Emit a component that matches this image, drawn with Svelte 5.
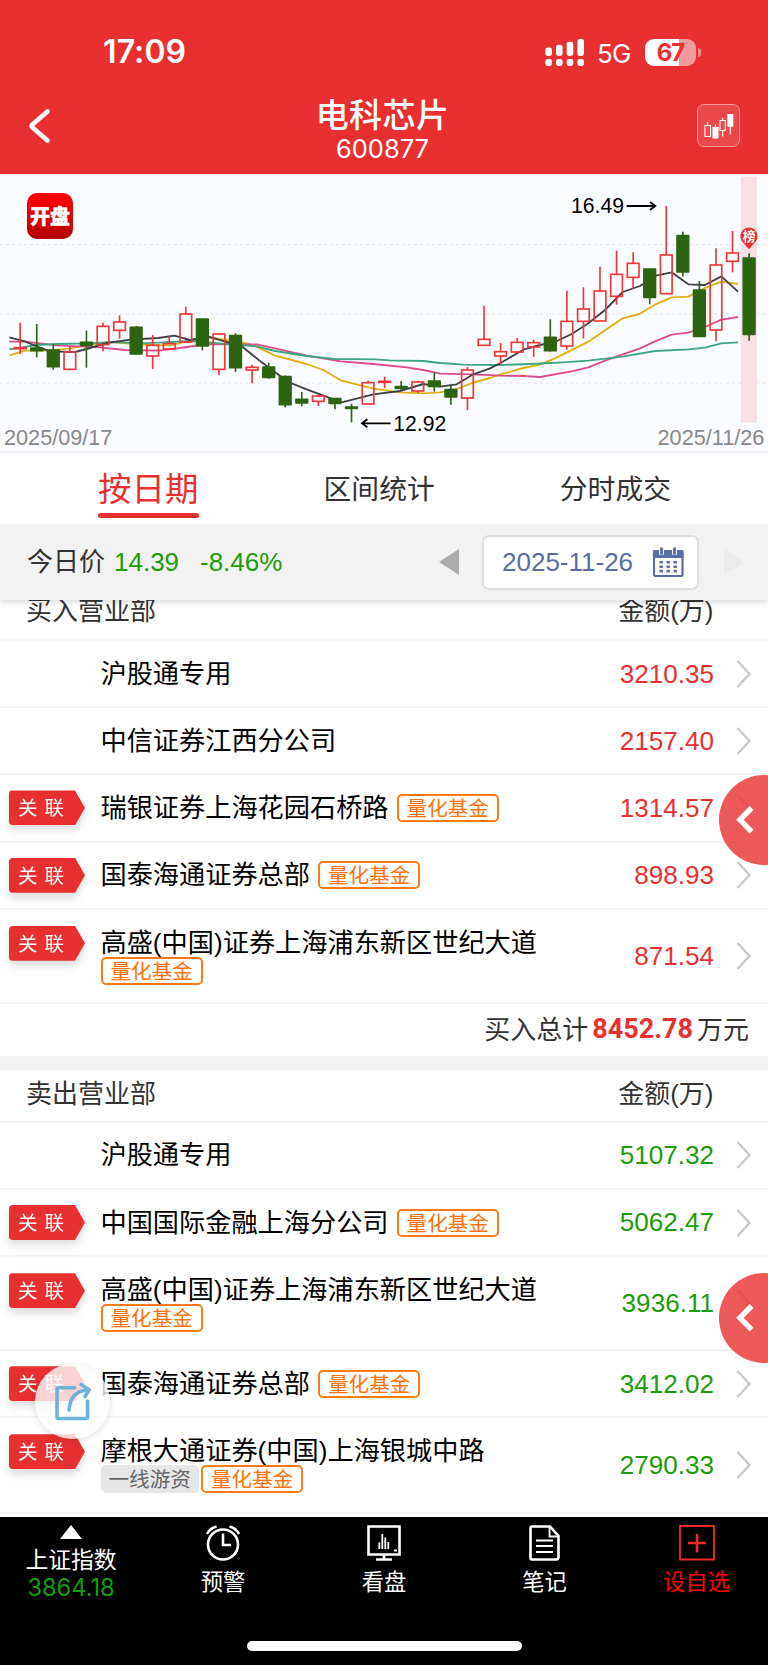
<script lang="ts">
    type Seat = {
        name: string;
        amount: string;
        linked?: boolean;
        tags?: string[];
        wrap?: boolean;
    };

    const buyers: Seat[] = [
        { name: "沪股通专用", amount: "3210.35" },
        { name: "中信证券江西分公司", amount: "2157.40" },
        { name: "瑞银证券上海花园石桥路", amount: "1314.57", linked: true, tags: ["量化基金"] },
        { name: "国泰海通证券总部", amount: "898.93", linked: true, tags: ["量化基金"] },
        { name: "高盛(中国)证券上海浦东新区世纪大道", amount: "871.54", linked: true, tags: ["量化基金"], wrap: true },
    ];

    const sellers: Seat[] = [
        { name: "沪股通专用", amount: "5107.32" },
        { name: "中国国际金融上海分公司", amount: "5062.47", linked: true, tags: ["量化基金"] },
        { name: "高盛(中国)证券上海浦东新区世纪大道", amount: "3936.11", linked: true, tags: ["量化基金"], wrap: true },
        { name: "国泰海通证券总部", amount: "3412.02", linked: true, tags: ["量化基金"] },
        { name: "摩根大通证券(中国)上海银城中路", amount: "2790.33", linked: true, tags: ["一线游资", "量化基金"], wrap: true },
    ];

    // [up, high, body top, body bottom, low], chart units (3 per pixel)
    const candles = [
        [1, 456, 531, 534, 550], [0, 460, 532, 540, 560], [0, 520, 538, 588, 597],
        [1, 528, 544, 596, 596], [0, 480, 515, 524, 591], [1, 456, 467, 522, 542],
        [1, 434, 454, 479, 504], [0, 466, 470, 550, 550], [1, 493, 524, 556, 595],
        [1, 497, 519, 535, 535], [1, 408, 430, 514, 514], [0, 445, 445, 526, 539],
        [1, 487, 490, 596, 614], [0, 488, 495, 591, 604], [1, 582, 590, 598, 638],
        [0, 576, 589, 620, 624], [0, 614, 618, 702, 710], [0, 664, 686, 697, 707],
        [1, 672, 676, 692, 706], [0, 682, 684, 698, 716], [0, 699, 709, 713, 755],
        [1, 630, 636, 700, 700], [1, 618, 632, 635, 652], [0, 631, 648, 653, 660],
        [1, 630, 634, 661, 667], [0, 606, 631, 647, 663], [0, 642, 657, 679, 702],
        [1, 589, 598, 682, 719], [1, 405, 506, 524, 524], [1, 517, 543, 556, 580],
        [1, 502, 515, 544, 545], [1, 507, 516, 529, 559], [0, 446, 500, 540, 543],
        [1, 360, 452, 526, 537], [1, 350, 415, 452, 503], [1, 288, 361, 451, 451],
        [1, 240, 311, 377, 402], [1, 245, 278, 320, 355], [0, 295, 295, 380, 401],
        [1, 106, 253, 369, 369], [0, 183, 195, 304, 317], [0, 331, 358, 497, 497],
        [1, 233, 283, 478, 512], [1, 181, 247, 272, 305], [0, 248, 262, 491, 510],
    ].map(([up, high, top, bottom, low], i) => ({
        x: 60.5 + i * 49.7,
        up: up === 1,
        high,
        top,
        bottom,
        low,
    }));

    const averages = [
        {
            color: "#ddb010",
            points: "28,554 75,540 150,540 210,533 260,523 330,514 420,522 510,524 570,510 625,500 690,510 740,518 770,528 825,555 920,580 970,598 1022,629 1120,654 1200,665 1270,668 1320,665 1370,655 1420,636 1470,622 1500,612 1570,592 1620,582 1665,563 1765,513 1868,443 1918,430 1965,402 2015,380 2065,378 2115,352 2164,333 2214,340",
        },
        {
            color: "#dc4c8c",
            points: "28,513 75,513 170,524 300,530 375,538 475,540 540,532 620,520 700,521 770,521 825,533 920,555 1022,572 1120,580 1220,590 1270,598 1320,609 1420,611 1500,615 1570,616 1620,619 1715,602 1765,590 1815,570 1868,551 1920,533 1965,512 2015,492 2065,486 2115,469 2164,447 2214,439",
        },
        {
            color: "#3da583",
            points: "28,536 110,523 170,520 260,518 350,514 420,518 475,516 570,511 625,515 690,521 770,527 825,541 920,556 1005,565 1125,566 1170,569 1270,571 1320,577 1390,582 1500,583 1590,580 1690,575 1765,570 1868,558 1965,541 2065,536 2115,531 2164,518 2214,515",
        },
        {
            color: "#404046",
            points: "28,500 75,512 110,527 150,542 225,544 260,535 320,517 390,507 475,502 523,495 570,508 625,498 690,517 727,528 780,571 865,634 920,656 1025,695 1120,671 1200,661 1270,640 1320,648 1370,641 1420,611 1470,593 1500,578 1570,537 1620,523 1665,514 1715,490 1765,458 1815,418 1868,364 1920,346 1968,315 2015,305 2065,341 2115,343 2164,317 2214,363",
        },
    ];

    const tabs = ["按日期", "区间统计", "分时成交"];
    let activeTab = $state(0);

    const signal = [46.5, 43.7, 40.8, 38];
</script>

{#snippet seatRow(seat: Seat, side: string)}
    <div class="row" class:tall={seat.wrap}>
        <div class="mark">
            {#if seat.linked}
                <span class="linked"><span>关联</span></span>
            {/if}
        </div>
        <div class="seat">
            <span class="name">{seat.name}</span>
            {#if seat.tags}
                <div class="tags">
                    {#each seat.tags as tag}
                        <span class="tag" class:grey={tag === "一线游资"}>{tag}</span>
                    {/each}
                </div>
            {/if}
        </div>
        <span class="amount {side}">{seat.amount}</span>
        <svg class="chevron" width="18" height="30" viewBox="0 0 18 30">
            <path d="M2.5 2 L14.5 15 L2.5 28" />
        </svg>
    </div>
{/snippet}

<div class="screen">
    <header>
        <div class="status">
            <span class="clock">17:09</span>
            <svg class="signal" width="40" height="30" viewBox="545 36 40 30">
                {#each signal as top, i}
                    <rect x={545.3 + i * 10.7} y={top} width="6.6" height={55 - top} rx="2.4" />
                    <rect x={545.3 + i * 10.7} y="58" width="6.6" height="7" rx="2.4" />
                {/each}
            </svg>
            <span class="network">5G</span>
            <div class="battery"><span>67</span></div>
            <i class="cap"></i>
        </div>
        <div class="titlebar">
            <svg class="back" width="28" height="40" viewBox="0 0 28 40">
                <path d="M22.5 6.5 L7.5 19.5 Q6 21 7.5 22.5 L22.5 35.5" />
            </svg>
            <div class="title">
                <h1>电科芯片</h1>
                <p>600877</p>
            </div>
            <div class="kline">
                <svg width="42" height="42" viewBox="0 0 42 42">
                    <path class="line" d="M9.5 17 V20 M7 20.5 H12.5 V31.5 H7 Z M24.7 12.5 V15 M22 15.5 H27.3 V25.5 H22 Z M24.7 26 V31.5 M17.5 19.5 V22 M32.3 21 V29.5" />
                    <path class="solid" d="M14.5 22 H20.5 V33.5 H14.5 Z M29.3 9 H35.3 V21.7 H29.3 Z" />
                </svg>
            </div>
        </div>
    </header>

    <svg class="chart" width="768" height="279" viewBox="0 10 2304 837">
        <defs>
            <linearGradient id="logo" x1="0" y1="0" x2="0" y2="1">
                <stop offset="0" stop-color="#fd0000" />
                <stop offset="0.35" stop-color="#ee0000" />
                <stop offset="1" stop-color="#b00000" />
            </linearGradient>
        </defs>
        {#each [222, 430, 637] as y}
            <line class="grid" x1="0" x2="2304" y1={y} y2={y} />
        {/each}
        <line class="edge" x1="0" x2="2304" y1="844" y2="844" />
        <rect x="2222" y="18" width="49" height="738" fill="#f8dfe6" />
        {#each averages as avg}
            <polyline points={avg.points} stroke={avg.color} />
        {/each}
        {#each candles as c}
            {#if c.up}
                <g class="up">
                    <line x1={c.x} x2={c.x} y1={c.high} y2={c.top} />
                    <line x1={c.x} x2={c.x} y1={c.bottom} y2={c.low} />
                    <rect x={c.x - 17.5} y={c.top} width="35" height={c.bottom - c.top} />
                </g>
            {:else}
                <g class="down">
                    <line x1={c.x} x2={c.x} y1={c.high} y2={c.low} />
                    <rect x={c.x - 17.5} y={c.top} width="35" height={c.bottom - c.top} />
                </g>
            {/if}
        {/each}

        <rect x="81" y="67" width="138" height="138" rx="30" fill="url(#logo)" />
        <text class="logo" x="150" y="160">开盘</text>

        <text class="peak" x="1713" y="128">16.49</text>
        <path class="arrow" d="M1880 106 H1964 M1950 94 L1966 106 L1950 118" />
        <text class="peak" x="1180" y="780">12.92</text>
        <path class="arrow" d="M1172 758 H1088 M1102 746 L1086 758 L1102 770" />

        <path d="M2247 236 L2226 212 A26 26 0 1 1 2268 212 Z" fill="#e53030" />
        <text class="rank" x="2247" y="211">榜</text>

        <text class="date" x="12" y="823">2025/09/17</text>
        <text class="date end" x="2293" y="823">2025/11/26</text>
    </svg>

    <nav class="tabs">
        {#each tabs as tab, i}
            <button class:active={activeTab === i} onclick={() => (activeTab = i)}>{tab}</button>
        {/each}
    </nav>

    <section class="filter">
        <span class="label">今日价</span>
        <span class="price">14.39</span>
        <span class="change">-8.46%</span>
        <i class="prev"></i>
        <div class="picker">
            <span>2025-11-26</span>
            <svg width="32" height="30" viewBox="0 0 32 30">
                <rect x="2" y="4" width="28.5" height="25" rx="1.5" />
                <path class="fill" d="M1 3.5 H31.5 V11 H1 Z" />
                <path class="ring" d="M9.5 0 V7.5 M22.5 0 V7.5" />
                <path class="pin" d="M9.5 0.5 V7 M22.5 0.5 V7" />
                <path class="dots" d="M7.5 15.3 H25 M7.5 19.7 H25 M7.5 24.1 H25" />
            </svg>
        </div>
        <i class="next"></i>
    </section>

    <section>
        <div class="head first"><span>买入营业部</span><span>金额(万)</span></div>
        {#each buyers as seat}
            {@render seatRow(seat, "buy")}
        {/each}
        <div class="total">买入总计<b>8452.78</b>万元</div>
    </section>

    <section class="sell">
        <div class="head"><span>卖出营业部</span><span>金额(万)</span></div>
        {#each sellers as seat}
            {@render seatRow(seat, "sold")}
        {/each}
    </section>

    <footer>
        <div class="menu">
            <div class="item index">
                <i></i>
                <span>上证指数</span>
                <em>3864.18</em>
            </div>
            <div class="item">
                <svg width="36" height="36" viewBox="0 0 36 36">
                    <circle cx="18" cy="19.5" r="15" />
                    <path d="M18 8.5 V20 H26 M2 9 Q5 3 11.5 1.5 M34 9 Q31 3 24.5 1.5" />
                </svg>
                <span>预警</span>
            </div>
            <div class="item">
                <svg width="36" height="36" viewBox="0 0 36 36">
                    <path d="M2.5 1.5 H33.5 V29.5 H2.5 Z M10 34.5 H26 M18 30 V34" />
                    <path class="thin" d="M13.3 24 V17.5 M16.3 24 V9 M19.3 24 V12.5 M22.3 24 V17 M28 25.5 H31" />
                </svg>
                <span>看盘</span>
            </div>
            <div class="item">
                <svg width="36" height="36" viewBox="0 0 36 36">
                    <path d="M5 1.5 H23 L31.5 11 V32 Q31.5 34.5 29 34.5 H5 Q3.5 34.5 3.5 33 V3 Q3.5 1.5 5 1.5 Z" />
                    <path class="thin" d="M22.5 2 V11.5 H31 M9 15.5 H26 M9 21 H26 M9 27 H26" />
                </svg>
                <span>笔记</span>
            </div>
            <div class="item add">
                <svg width="36" height="36" viewBox="0 0 36 36">
                    <path class="thin" d="M1 1 H35 V34.5 H1 Z" />
                    <path d="M18 9 V27.5 M9 18 H27" />
                </svg>
                <span>设自选</span>
            </div>
        </div>
        <div class="home"></div>
    </footer>

    {#each ["upper", "lower"] as place}
        <div class="drawer {place}">
            <svg width="20" height="30" viewBox="0 0 20 30">
                <path d="M16.5 3 L5 14.8 L16.5 26.6" />
            </svg>
        </div>
    {/each}
    <div class="share">
        <svg width="38" height="40" viewBox="0 0 38 40">
            <path d="M20.5 5.8 H4.5 Q3 5.8 3 7.3 V35 Q3 36.5 4.5 36.5 H32 Q33.5 36.5 33.5 35 V19" />
            <path d="M15 28 C16 18 19 9 34.5 7.7 M27 2.5 L35.2 7.7 L31 14.5" />
        </svg>
    </div>
</div>

<style>
    :global(body) {
        background: #fff;
    }

    .screen {
        position: relative;
        width: 768px;
        height: 1665px;
        overflow: hidden;
        display: flex;
        flex-direction: column;
        background: #fff;
        color: #333;
        font-family: "Liberation Sans", "Noto Sans CJK SC", sans-serif;
        font-size: 26px;
        line-height: 1;
    }

    header {
        height: 174px;
        background: #e93030;
        color: #fff;
    }

    .status {
        display: flex;
        align-items: center;
        height: 80px;
        padding: 24px 0 0 103px;
        box-sizing: border-box;
        font-family: Inter, sans-serif;
    }

    .clock {
        width: 442px;
        font-size: 32px;
        font-weight: 600;
        letter-spacing: 0.1px;
    }

    .signal {
        fill: #fff;
    }

    .network {
        width: 47px;
        margin-left: 12px;
        box-sizing: border-box;
        font-size: 26px;
        letter-spacing: -0.8px;
        padding-top: 3px;
    }

    .battery {
        width: 51px;
        height: 27px;
        margin-left: 1px;
        border-radius: 9px;
        background: linear-gradient(90deg, #fff 67%, #f49a9a 67%);
        color: #e93030;
        font-size: 24px;
        font-weight: 700;
        line-height: 27px;
        text-align: center;
        letter-spacing: -1px;
    }

    .cap {
        width: 3px;
        height: 9px;
        margin-left: 1.5px;
        border-radius: 0 4px 4px 0;
        background: #f28c8c;
    }

    .titlebar {
        display: flex;
        justify-content: space-between;
        height: 94px;
        padding: 0 28px 0 25px;
    }

    .back {
        margin-top: 25px;
        fill: none;
        stroke: #fff;
        stroke-width: 4.6;
        stroke-linecap: round;
    }

    .title {
        display: flex;
        flex-direction: column;
        align-items: center;
        margin-left: 15px;
    }

    h1 {
        margin: 15px 0 0;
        font: 500 33px/36px "Noto Sans CJK SC", sans-serif;
        letter-spacing: 0.4px;
    }

    p {
        margin: 7px 0 0;
        font: 400 25.5px/22px Inter, sans-serif;
        letter-spacing: 0;
    }

    .kline {
        width: 41px;
        height: 41px;
        margin-top: 24px;
        border: 1px solid #f49a9a;
        border-radius: 7px;
        background: #ed4848;
    }

    .kline .line {
        fill: none;
        stroke: #fff;
        stroke-width: 1.1;
    }

    .kline .solid {
        fill: #fff;
    }

    .chart {
        flex: none;
        display: block;
        background: #fbfcff;
    }

    .chart .grid {
        stroke: #dfe1e8;
        stroke-width: 3;
        stroke-dasharray: 8 10;
    }

    .chart .edge {
        stroke: #ececf3;
        stroke-width: 4;
    }

    .chart polyline {
        fill: none;
        stroke-width: 5.5;
        stroke-linejoin: round;
    }

    .up {
        fill: none;
        stroke: #ec3838;
        stroke-width: 5;
    }

    .down {
        fill: #2d6412;
        stroke: #2d6412;
        stroke-width: 5;
        stroke-linejoin: round;
    }

    .arrow {
        fill: none;
        stroke: #000;
        stroke-width: 5.5;
    }

    .peak {
        font-size: 63.5px;
        fill: #000;
    }

    .date {
        font-size: 65px;
        fill: #888;
    }

    .end {
        text-anchor: end;
    }

    .logo,
    .rank {
        font-family: "Noto Sans CJK SC", sans-serif;
        font-weight: 900;
        font-size: 60px;
        fill: #fff;
        text-anchor: middle;
    }

    .logo {
        stroke: #fff;
        stroke-width: 1.5;
    }

    .rank {
        font-size: 38px;
        font-weight: 700;
    }

    .tabs {
        display: flex;
        justify-content: space-between;
        height: 71px;
        padding: 0 97px 0 98px;
    }

    .tabs button {
        height: 65px;
        padding: 2px 0 0;
        box-sizing: border-box;
        border: 0;
        background: none;
        color: #333;
        font: 27.8px/56px "Noto Sans CJK SC", sans-serif;
    }

    .tabs .active {
        position: relative;
        color: #e93030;
        font-size: 33.5px;
    }

    .tabs .active::after {
        content: "";
        position: absolute;
        left: 0;
        right: 0;
        bottom: 0;
        height: 5.5px;
        border-radius: 3px;
        background: #e93030;
    }

    .filter {
        position: relative;
        display: flex;
        align-items: center;
        height: 76px;
        padding-left: 27px;
        box-sizing: border-box;
        background: #f2f2f2;
        box-shadow: 0 3px 5px rgba(0, 0, 0, 0.12);
        color: #1e9b08;
    }

    .label {
        width: 87px;
        color: #333;
    }

    .price {
        width: 86px;
    }

    .change {
        width: 239px;
    }

    .prev,
    .next {
        border: 13px solid transparent;
        border-left-width: 0;
        border-right: 20px solid #ababab;
    }

    .next {
        margin-left: 25px;
        border-right-width: 0;
        border-right-color: transparent;
        border-left: 20px solid #eaeaea;
    }

    .picker {
        display: flex;
        align-items: center;
        justify-content: space-between;
        width: 217px;
        height: 55px;
        margin-left: 23px;
        padding: 0 13px 0 18px;
        box-sizing: border-box;
        border: 2px solid #dedede;
        border-radius: 7px;
        background: #fff;
        color: #586da3;
        white-space: nowrap;
    }

    .picker svg {
        fill: #fff;
        stroke: #586da3;
        stroke-width: 2.2;
    }

    .picker .fill {
        fill: #586da3;
        stroke: none;
    }

    .picker .ring {
        stroke: #fff;
        stroke-width: 5;
    }

    .picker .pin {
        stroke-width: 2.8;
    }

    .picker .dots {
        stroke-width: 2.6;
        stroke-dasharray: 3.4 3.6;
    }

    .head {
        display: flex;
        justify-content: space-between;
        align-items: center;
        height: 53px;
        padding: 0 54.5px 2px 26px;
        box-sizing: border-box;
        border-bottom: 2px solid #f3f3f5;
    }

    .first {
        height: 41px;
        padding-bottom: 17px;
    }

    .row {
        display: flex;
        align-items: center;
        height: 67.2px;
        box-sizing: border-box;
        border-bottom: 2px solid #f3f3f5;
    }

    .tall {
        height: 94px;
    }

    .sell .row:last-child {
        height: 96px;
    }

    .mark {
        width: 100.5px;
        padding-left: 9px;
        box-sizing: border-box;
    }

    .tall .mark {
        align-self: flex-start;
        padding-top: 16px;
    }

    .linked {
        display: block;
        width: 76px;
        filter: drop-shadow(0 5px 4px rgba(0, 0, 0, 0.14));
    }

    .linked span {
        display: block;
        height: 35px;
        padding-left: 9px;
        border-radius: 4px;
        background: #e93030;
        clip-path: polygon(0 0, 66px 0, 100% 50%, 66px 100%, 0 100%);
        color: #fff;
        font: 19.5px/34px "Noto Sans CJK SC", sans-serif;
        letter-spacing: 7px;
    }

    .seat {
        flex: 1;
        display: flex;
        align-items: center;
        gap: 8px;
    }

    .tall .seat {
        align-self: flex-start;
        flex-direction: column;
        align-items: flex-start;
        gap: 0;
        padding-top: 19px;
    }

    .name {
        color: #000;
        font-size: 26.2px;
        line-height: 28px;
        white-space: nowrap;
    }

    .tags {
        display: flex;
        gap: 2px;
    }

    .tag {
        height: 28px;
        padding: 0 8px;
        box-sizing: border-box;
        border: 2px solid #ff7a14;
        border-radius: 5px;
        color: #ff7209;
        font: 20.6px/23px "Noto Sans CJK SC", sans-serif;
    }

    .grey {
        padding: 0 6px;
        border-color: #e6e6e6;
        background: #e6e6e6;
        color: #666;
    }

    .amount {
        font-size: 26.1px;
    }

    .buy {
        color: #e93030;
    }

    .sold {
        color: #1e9b08;
    }

    .chevron {
        margin: 0 15.5px 0 20.5px;
        fill: none;
        stroke: #c9c9c9;
        stroke-width: 2.4;
    }

    .total {
        display: flex;
        justify-content: flex-end;
        align-items: center;
        height: 52px;
        padding-right: 19px;
    }

    .total b {
        margin: 0 4px;
        color: #e93030;
        font: 700 27px/27px Roboto, sans-serif;
    }

    .sell {
        height: 461px;
        border-top: 14px solid #f2f2f2;
        box-sizing: border-box;
    }

    footer {
        flex: 1;
        display: flex;
        flex-direction: column;
        justify-content: space-between;
        align-items: center;
        background: #000;
        color: #fff;
    }

    .menu {
        display: grid;
        grid-template-columns: 142px 162px 160px 161px 143px;
        width: 768px;
    }

    .item {
        display: flex;
        flex-direction: column;
        align-items: center;
        gap: 4px;
        padding-top: 8px;
        font: 22.3px/30px "Noto Sans CJK SC", sans-serif;
    }

    .item svg {
        fill: none;
        stroke: #fff;
        stroke-width: 2.6;
    }

    .item .thin {
        stroke-width: 1.8;
    }

    .index {
        gap: 0;
        font-size: 22.8px;
    }

    .index i {
        margin-bottom: 5px;
        border: 11px solid transparent;
        border-top-width: 0;
        border-bottom: 14px solid #fff;
    }

    .index em {
        color: #149b0a;
        font: 23.6px/28px Inter, sans-serif;
    }

    .item.add {
        color: #f00;
    }

    .add svg {
        stroke: #ee2a2a;
    }

    .home {
        width: 275px;
        height: 10px;
        margin-bottom: 14px;
        border-radius: 5px;
        background: #fff;
    }

    .drawer {
        position: absolute;
        left: 719px;
        top: 775px;
        display: flex;
        align-items: center;
        width: 90px;
        height: 90px;
        padding-left: 16px;
        box-sizing: border-box;
        border-radius: 50%;
        background: rgba(234, 56, 56, 0.84);
        fill: none;
        stroke: #fff;
        stroke-width: 5.4;
    }

    .lower {
        top: 1273px;
    }

    .share {
        position: absolute;
        left: 35px;
        top: 1364px;
        display: grid;
        place-items: center;
        width: 75px;
        height: 75px;
        border-radius: 50%;
        background: rgba(252, 252, 252, 0.8);
        box-shadow: 0 2px 7px rgba(0, 0, 0, 0.12);
        fill: none;
        stroke: #6fb2d9;
        stroke-width: 3.6;
        stroke-linecap: round;
        stroke-linejoin: round;
    }
</style>
